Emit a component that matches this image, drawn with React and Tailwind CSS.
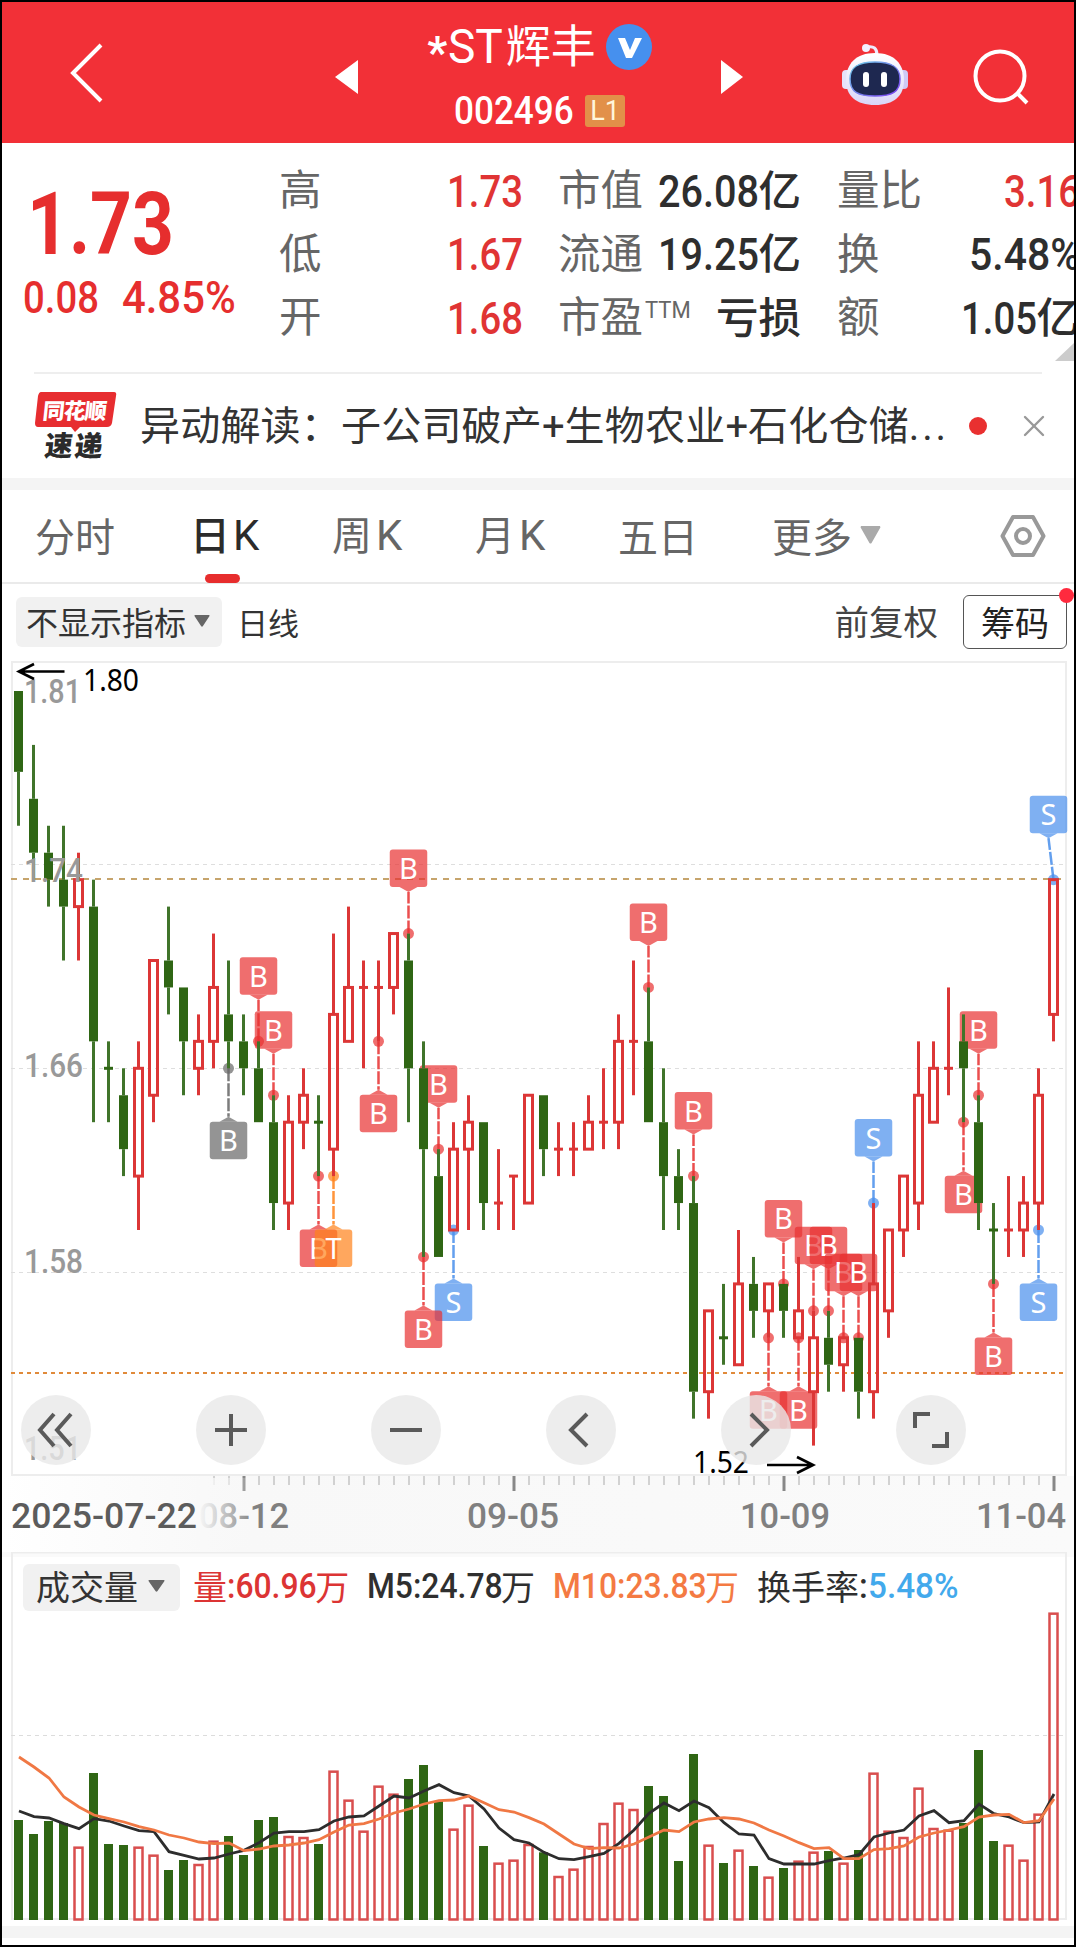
import { X } from "lucide-react";

const RED = "#dc3636";
const GREEN = "#2f6614";

// [color, high, bodyTop, bodyBottom, low] in 0.01 steps below 1.80
const candles = [
    ["g", 0, 0, 3, 5], ["g", 2, 4, 6, 7], ["g", 5, 6, 7, 8], ["g", 5, 7, 8, 10], ["r", 6, 7, 8, 10],
    ["g", 7, 8, 13, 16], ["g", 13, 14, 14, 16], ["g", 14, 15, 17, 18], ["r", 13, 14, 18, 20], ["r", 10, 10, 15, 16],
    ["g", 8, 10, 11, 12], ["g", 11, 11, 13, 15], ["r", 12, 13, 14, 15], ["r", 9, 11, 13, 14], ["g", 10, 12, 13, 14],
    ["g", 12, 13, 14, 15], ["g", 13, 14, 16, 16], ["g", 15, 16, 19, 20], ["r", 15, 16, 19, 20], ["r", 14, 15, 16, 17],
    ["g", 15, 16, 16, 18], ["r", 9, 12, 17, 18], ["r", 8, 11, 13, 13], ["r", 10, 11, 11, 14], ["r", 10, 11, 11, 13],
    ["r", 9, 9, 11, 12], ["g", 9, 10, 14, 16], ["g", 13, 14, 17, 21], ["g", 17, 18, 21, 21], ["r", 16, 17, 20, 20],
    ["r", 15, 16, 17, 20], ["g", 16, 16, 19, 20], ["r", 17, 19, 19, 20], ["r", 18, 18, 18, 20], ["r", 15, 15, 19, 19],
    ["g", 15, 15, 17, 18], ["r", 16, 17, 17, 18], ["r", 16, 17, 17, 18], ["r", 15, 16, 17, 17], ["r", 14, 16, 16, 17],
    ["r", 12, 13, 16, 17], ["r", 10, 13, 13, 15], ["g", 11, 13, 16, 16], ["g", 14, 16, 18, 20], ["g", 17, 18, 19, 20],
    ["g", 18, 19, 26, 27], ["r", 23, 23, 26, 27], ["g", 22, 24, 24, 25], ["r", 20, 22, 25, 25], ["g", 21, 22, 23, 24],
    ["r", 22, 22, 23, 24], ["g", 22, 22, 23, 24], ["r", 21, 23, 24, 24], ["r", 23, 24, 26, 28], ["g", 23, 24, 25, 26],
    ["r", 24, 24, 25, 26], ["g", 24, 24, 26, 27], ["r", 19, 22, 26, 27], ["r", 20, 20, 23, 24], ["r", 18, 18, 20, 21],
    ["r", 13, 15, 19, 20], ["r", 13, 14, 16, 16], ["r", 11, 14, 14, 15], ["g", 12, 13, 14, 16], ["g", 15, 16, 19, 20],
    ["g", 19, 20, 20, 22], ["r", 18, 20, 20, 21], ["r", 18, 19, 20, 21], ["r", 14, 15, 19, 20], ["r", 7, 7, 12, 13],
];

// [index, label, step, direction, x shift]
const flags = [
    [14, "B", 14, 1, 0, "#666666"], [16, "B", 13, -1], [17, "B", 15, -1], [20, "B", 18, 1], [21, "T", 18, 1],
    [24, "B", 13, 1], [26, "B", 9, -1], [29, "S", 20, 1], [27, "B", 21, 1], [28, "B", 17, -1],
    [42, "B", 11, -1], [45, "B", 18, -1], [50, "B", 24, 1], [51, "B", 22, -1], [52, "B", 24, 1],
    [53, "B", 23, -1], [54, "B", 23, -1], [55, "B", 24, -1], [56, "B", 24, -1], [57, "S", 19, -1],
    [63, "B", 16, 1], [64, "B", 15, -1], [65, "B", 22, 1], [68, "S", 20, 1], [69, "S", 7, -1, -5],
];
const flagColors = { B: "#e83030", S: "#488fec", T: "#ff8219" };

const volumes = [
    660, 702, 663, 669, 740, 519, 732, 735, 740, 764, 810, 780, 792, 722, 708, 765, 660, 651, 708, 711, 732, 512, 599,
    692, 557, 581, 537, 495, 603, 686, 614, 738, 788, 779, 732, 757, 828, 806, 738, 669, 608, 627, 558, 588, 783, 462,
    734, 789, 749, 798, 830, 804, 782, 755, 753, 788, 750, 518, 692, 711, 563, 684, 689, 669, 450, 723, 734, 779, 641, 38,
];
const ma5 = [
    633, 650, 654, 671, 686, 656, 663, 678, 692, 695, 755, 766, 777, 774, 762, 751, 728, 699, 695, 695, 689, 663, 651,
    648, 618, 588, 594, 573, 554, 578, 588, 627, 684, 719, 729, 757, 776, 779, 770, 760, 730, 690, 640, 609, 632, 603,
    623, 668, 702, 705, 776, 792, 792, 792, 782, 774, 764, 711, 699, 690, 648, 632, 668, 662, 612, 641, 651, 668, 666, 582,
];
const ma10 = [
    471, 501, 534, 591, 621, 645, 656, 666, 680, 690, 705, 714, 726, 731, 729, 752, 747, 738, 735, 729, 719, 696, 675,
    671, 657, 639, 627, 612, 602, 600, 588, 608, 629, 636, 653, 672, 702, 732, 746, 743, 744, 732, 711, 690, 695, 666,
    657, 653, 657, 669, 690, 708, 728, 746, 743, 776, 776, 749, 746, 738, 711, 699, 690, 680, 651, 645, 643, 668, 662, 597,
];

const px = i => 18.5 + i * 15;
const py = n => 691 + n * 26.95;
const vy = v => 1600 + v / 3;
const points = list => list.map((v, i) => `${px(i) + 0.5},${vy(v)}`).join(" ");

const glyphWidths = { ".": 0.2637, ":": 0.242, "%": 0.732, M: 0.873, L: 0.54, S: 0.6, T: 0.6 };

// Narrow digits: squeezed horizontally, the box keeps the squeezed width
function Num({ children, squeeze = 0.87, className = "" }) {
    const em = [...children].reduce((sum, c) => sum + (glyphWidths[c] || 0.5655), 0);
    return (
        <span className={`inline-block whitespace-nowrap font-[Roboto] font-medium ${className}`} style={{ width: `${em * squeeze}em` }}>
            <span className="inline-block origin-left" style={{ transform: `scaleX(${squeeze})` }}>{children}</span>
        </span>
    );
}

function Header() {
    return (
        <header className="flex h-[141px] bg-[#f23037] text-white">
            <div className="flex w-[330px] items-center pl-[66px]">
                <svg width="36" height="62" viewBox="0 0 36 62" fill="none" stroke="#fff" strokeWidth="4">
                    <path d="M33 3 L5 31 L33 59" />
                </svg>
            </div>
            <div className="flex w-[413px] items-center justify-between">
                <svg width="24" height="34" viewBox="0 0 24 34" fill="#fff" className="ml-[2px] mt-[8px]"><path d="M1 17 L24 0 V34z" /></svg>
                <div className="flex flex-col items-center pt-[3px]">
                    <div className="flex h-[60px] items-center text-[45px]">
                        <span className="w-[21px] pt-[12px] font-[Roboto] text-[44px] font-bold">*</span>
                        <Num squeeze={0.96} className="text-[48px] !font-normal">ST</Num>
                        <span className="-mt-[6px] ml-[2px]">辉丰</span>
                        <svg width="46" height="46" viewBox="0 0 46 46" className="ml-[10px] -mt-px">
                            <circle cx="23" cy="23" r="23" fill="#4690ee" />
                            <path d="M12 14 L19 14 L24 26 L29 14 H36 L26 34 H20z" fill="#fff" />
                        </svg>
                    </div>
                    <div className="mt-[14px] flex h-[40px] items-center gap-[12px]">
                        <Num squeeze={0.9} className="text-[39px]">002496</Num>
                        <span className="flex h-8 w-10 items-center justify-center rounded-[3px] bg-[#e29049] font-[Roboto] text-[27px] text-[#fff6dc]">L1</span>
                    </div>
                </div>
                <svg width="24" height="34" viewBox="0 0 24 34" fill="#fff" className="mt-[8px]"><path d="M0 0 L22 17 L0 34z" /></svg>
            </div>
            <div className="flex flex-1 items-center justify-end gap-[62px] pr-[45px]">
                <svg width="68" height="64" viewBox="0 0 68 64" className="mt-[2px]">
                    <defs>
                        <linearGradient id="shell" x1="0" y1="0" x2="0" y2="1">
                            <stop offset="0" stopColor="#fff" />
                            <stop offset="1" stopColor="#d9d6f8" />
                        </linearGradient>
                        <linearGradient id="rim" x1="0" y1="0" x2="1" y2="1">
                            <stop offset="0" stopColor="#6fd0e8" />
                            <stop offset="1" stopColor="#7a3cf0" />
                        </linearGradient>
                    </defs>
                    <path d="M26 5 Q36 3 36 13" fill="none" stroke="#eeeafd" strokeWidth="3" />
                    <circle cx="25" cy="6" r="4" fill="#f3f0ff" />
                    <rect x="1" y="28" width="10" height="19" rx="4" fill="#e6e2fb" />
                    <rect x="57" y="28" width="10" height="19" rx="4" fill="#cfcaf5" />
                    <path d="M34 11 C53 11 63 22 63 38 C63 54 53 63 34 63 C15 63 5 54 5 38 C5 22 15 11 34 11z" fill="url(#shell)" />
                    <path d="M34 20 C51 20 59 25 59 37 C59 50 51 54 34 54 C17 54 9 50 9 37 C9 25 17 20 34 20z" fill="#1e2850" stroke="url(#rim)" strokeWidth="1.5" />
                    <rect x="22" y="30" width="6" height="15" rx="3" fill="#fff" />
                    <rect x="40" y="30" width="6" height="15" rx="3" fill="#fff" />
                </svg>
                <svg width="58" height="58" viewBox="0 0 58 58" fill="none" stroke="#fff" strokeWidth="4" className="mt-[6px]">
                    <circle cx="29" cy="29" r="24.5" />
                    <path d="M46 46 L56 56" />
                </svg>
            </div>
        </header>
    );
}

function Row({ label, sup, value, unit, red, squeeze }) {
    return (
        <div className="flex h-[63.5px] items-center justify-between whitespace-nowrap">
            <span className="-mt-[5px] flex text-[42.5px] text-[#666]">
                {label}
                {sup && <Num squeeze={0.96} className="mt-[14px] ml-[2px] text-[23px] !font-normal leading-[30px]">{sup}</Num>}
            </span>
            <span className={`flex items-center text-[42.5px] font-medium ${red ? "text-[#e03434]" : "text-[#2e2e2e]"}`}>
                {value && <Num squeeze={squeeze} className="mt-[4px] text-[44px]">{value}</Num>}
                {unit && <span className="-mt-[4px]">{unit}</span>}
            </span>
        </div>
    );
}

function Quote() {
    return (
        <section className="relative flex h-[229px] overflow-hidden pt-[15px]">
            <div className="w-[277px] shrink-0 text-[#e62e2e]">
                <Num squeeze={0.84} className="mt-[24px] ml-[25px] text-[87px] !font-bold leading-[84px]">1.73</Num>
                <div className="flex gap-[24px] pl-[21px] pt-[6px] text-[44px] leading-[52px]">
                    <Num>0.08</Num>
                    <Num squeeze={0.95}>4.85%</Num>
                </div>
            </div>
            <div className="w-[243px] shrink-0">
                <Row label="高" value="1.73" red />
                <Row label="低" value="1.67" red />
                <Row label="开" value="1.68" red />
            </div>
            <div className="ml-[36px] w-[243px] shrink-0">
                <Row label="市值" value="26.08" unit="亿" squeeze={0.9} />
                <Row label="流通" value="19.25" unit="亿" squeeze={0.9} />
                <Row label="市盈" sup="TTM" unit="亏损" />
            </div>
            <div className="ml-[36px] w-[242px] shrink-0">
                <Row label="量比" value="3.16" red />
                <Row label="换" value="5.48%" squeeze={0.93} />
                <Row label="额" value="1.05" unit="亿" />
            </div>
            <svg width="19" height="18" className="absolute right-0 top-[200px]"><path d="M19 0 V18 H0z" fill="#ccc" /></svg>
        </section>
    );
}

function News() {
    return (
        <section className="mx-[32px] flex h-[106px] items-center border-t-2 border-[#eee]">
            <div className="relative ml-px flex h-[68px] w-[80px] shrink-0 flex-col items-center">
                <svg width="82" height="42" viewBox="0 0 82 42" className="absolute left-0 top-0">
                    <path d="M6 0 H79 Q82 0 81 4 L77 31 Q76 35 72 35 H45 L40 40 L36 35 H3 Q0 35 0 31 L3 4 Q4 0 6 0z" fill="#e72d30" />
                </svg>
                <span className="relative -skew-x-6 text-[22px] font-black leading-[34px] tracking-[-1px] text-white">同花顺</span>
                <span className="relative mt-[2px] -skew-x-6 text-[28px] font-black leading-[32px] tracking-[2px] text-[#2b2b2b]">速递</span>
            </div>
            <span className="-mt-[2px] ml-[25px] w-[815px] shrink-0 overflow-hidden whitespace-nowrap text-[40px] tracking-[0.2px] text-[#333]">
                异动解读：子公司破产<Num className="!font-normal" squeeze={1}>+</Num>生物农业<Num className="!font-normal" squeeze={1}>+</Num>石化仓储<span className="font-[Roboto] tracking-[2.8px]">...</span>
            </span>
            <span className="ml-[14px] h-[18px] w-[18px] shrink-0 rounded-full bg-[#e93030]" />
            <X size={36} strokeWidth={1.6} className="ml-[29px] shrink-0 text-[#999]" />
        </section>
    );
}

function Triangle({ w, h, color }) {
    return <svg width={w} height={h} viewBox="0 0 20 16" preserveAspectRatio="none"><path d="M1 0 H19 Q20 1 19 2 L11 15 Q10 16 9 15 L1 2 Q0 1 1 0z" fill={color} /></svg>;
}

function Tabs() {
    return (
        <nav className="flex h-[94px] items-center border-b-2 border-[#eaeaea] pl-[33px] text-[40px] text-[#666]">
            <span className="-mt-[3px] w-[155px]">分时</span>
            <span className="relative -mt-[3px] w-[142px] font-medium text-[#2b2b2b]">
                日<span className="pl-[3px] font-[Roboto] text-[42px] font-normal">K</span>
                <i className="absolute bottom-[-16px] left-[15px] h-[9px] w-[35px] rounded-full bg-[#e72d2d]" />
            </span>
            <span className="-mt-[3px] w-[143px]">周<span className="pl-[4px] font-[Roboto] text-[42px]">K</span></span>
            <span className="-mt-[3px] w-[143px]">月<span className="pl-[4px] font-[Roboto] text-[42px]">K</span></span>
            <span className="-mt-[3px] w-[154px]">五日</span>
            <span className="-mt-[3px] flex w-[228px] items-center gap-[8px]">更多<Triangle w={21} h={18} color="#aaa" /></span>
            <svg width="46" height="46" viewBox="0 0 46 46" fill="none" stroke="#999" strokeWidth="4" strokeLinejoin="round">
                <path d="M13 4 H33 L43.500 23 L33 42 H13 L2.500 23z" />
                <circle cx="23" cy="23" r="7" />
            </svg>
        </nav>
    );
}

function IndicatorBar() {
    return (
        <div className="flex h-[76px] items-center pl-[14px] pr-[7px]">
            <span className="flex h-[50px] w-[206px] items-center gap-[8px] rounded-md bg-[#f1f1f1] pb-[2px] pl-[10px] text-[32px] text-[#333]">
                不显示指标<Triangle w={16} h={12} color="#666" />
            </span>
            <span className="ml-[15px] text-[31px] text-[#333]">日线</span>
            <span className="-mt-[2px] ml-auto text-[34.500px] text-[#444]">前复权</span>
            <span className="relative ml-[25px] flex h-[54px] w-[104px] items-center justify-center rounded-md border-[1.500px] border-[#555] pb-[2px] text-[34px] text-[#222]">
                筹码
                <i className="absolute right-[-8px] top-[-8px] h-[15px] w-[15px] rounded-full bg-[#ff2a3e]" />
            </span>
        </div>
    );
}

function Flag({ flag }) {
    const [i, label, n, dir, shift = 0, custom] = flag;
    const color = custom || flagColors[label];
    const x = px(i);
    const fx = x + shift;
    const y = py(n);
    const top = dir < 0 ? y - 84 : y + 53.5;
    const base = dir < 0 ? y - 46.5 : y + 53.5;
    const tip = base - dir * 5;
    return (
        <g>
            <line x1={x} y1={y} x2={fx} y2={tip} stroke={color} strokeWidth="2.5" strokeDasharray="13 2" opacity=".85" />
            <circle cx={x} cy={y} r="5.500" fill={color} opacity=".7" />
            <rect x={fx - 18.75} y={top} width="37.500" height="37.500" rx="3" fill={color} opacity=".7" />
            <path d={`M${fx - 9} ${base} L${fx} ${tip} L${fx + 9} ${base}z`} fill={color} opacity=".7" />
            <text x={fx} y={top + 29.5} textAnchor="middle" fill="#fff" fontSize="29" fontFamily="Noto Sans, sans-serif">{label}</text>
        </g>
    );
}

function Candle({ candle, i }) {
    const [kind, high, top, bottom, low] = candle;
    const x = px(i);
    const color = kind === "r" ? RED : GREEN;
    const wick = kind === "r" ? RED : "#40742a";
    return (
        <g>
            {high < top && <line x1={x} x2={x} y1={py(high)} y2={py(top)} stroke={wick} strokeWidth="3" />}
            {low > bottom && <line x1={x} x2={x} y1={py(bottom)} y2={py(low)} stroke={wick} strokeWidth="3" />}
            {top === bottom && <line x1={x - 4.5} x2={x + 4.5} y1={py(top)} y2={py(top)} stroke={color} strokeWidth="3" />}
            {top !== bottom && kind === "g" && <rect x={x - 4.5} y={py(top)} width="9" height={py(bottom) - py(top)} fill={color} />}
            {top !== bottom && kind === "r" && <rect x={x - 4} y={py(top)} width="8" height={py(bottom) - py(top)} fill="none" stroke={color} strokeWidth="3" />}
        </g>
    );
}

const axisLabels = [["1.81", 702.5], ["1.74", 881.5], ["1.66", 1077], ["1.58", 1272.5], ["1.51", 1459.5]];
const dates = [["08-12", 199, 90], ["09-05", 467, 92], ["10-09", 740, 90], ["11-04", 976, 90]];

const controls = [
    "M33 19 L19 35 L33 51 M50 19 L36 35 L50 51",
    "M35 19 V51 M19 35 H51",
    "M19 35 H51",
    "M41 19 L25 35 L41 51",
    "M30 19 L46 35 L30 51",
    "M19 33 V19 H34 M51 37 V51 H36",
];

function PriceChart() {
    return (
        <div className="relative h-[892px]">
            <svg width="1072" height="892" viewBox="2 660 1072 892" className="block">
                <defs>
                    <linearGradient id="axisFade" x1="0" x2="1">
                        <stop offset="0" stopColor="#fff" />
                        <stop offset=".22" stopColor="#f8f8f8" />
                        <stop offset="1" stopColor="#fafafa" />
                    </linearGradient>
                    <linearGradient id="dateFade" x1="0" x2="1">
                        <stop offset="0" stopColor="#f9f9f9" />
                        <stop offset=".2" stopColor="#f9f9f9" stopOpacity=".85" />
                        <stop offset="1" stopColor="#f9f9f9" stopOpacity="0" />
                    </linearGradient>
                </defs>
                <rect x="2" y="1476" width="1072" height="76" fill="url(#axisFade)" />
                <rect x="12" y="662" width="1054" height="813" fill="#fff" stroke="#ededed" strokeWidth="2" />
                {[864.5, 1068.5, 1272.5].map(y => (
                    <line key={y} x1="11" x2="1064" y1={y} y2={y} stroke="#dedede" strokeWidth="1.200" strokeDasharray="4 4" />
                ))}
                <line x1="11" x2="1062" y1="879" y2="879" stroke="#c6a46c" strokeWidth="2" strokeDasharray="6 6" />
                <line x1="11" x2="1064" y1="1373" y2="1373" stroke="#e08a3a" strokeWidth="2" strokeDasharray="4 4" />

                {flags.map(flag => <Flag key={flag[0]} flag={flag} />)}
                {candles.map((candle, i) => <Candle key={i} candle={candle} i={i} />)}

                {axisLabels.map(([label, y]) => (
                    <text key={label} x="24" y={y} textLength={label.endsWith("1") ? 57 : 59} lengthAdjust="spacingAndGlyphs" fill="#999" fontSize="34" fontWeight="500" fontFamily="Roboto, sans-serif">{label}</text>
                ))}
                <path d="M64.500 671.500 H20 M34 664 L19 671.500 L34 679" fill="none" stroke="#000" strokeWidth="2.700" />
                <text x="83" y="691" textLength="56" lengthAdjust="spacingAndGlyphs" fontSize="30" fontFamily="Noto Sans, sans-serif">1.80</text>
                <path d="M767 1465 H813 M797 1457 L813 1465 L797 1473" fill="none" stroke="#000" strokeWidth="2.700" />
                <text x="693" y="1472.500" textLength="56" lengthAdjust="spacingAndGlyphs" fontSize="30" fontFamily="Noto Sans, sans-serif">1.52</text>

                {candles.map((_, i) => i > 12 && (
                    <line key={i} x1={px(i) + 0.5} x2={px(i) + 0.5} y1="1476" y2={i % 18 === 15 ? 1491 : 1485} stroke={i % 18 === 15 ? "#888" : "#c4c4c4"} strokeWidth={i % 18 === 15 ? 3 : 1.5} />
                ))}
                {dates.map(([label, x, w]) => (
                    <text key={label} x={x} y="1528" textLength={w} lengthAdjust="spacingAndGlyphs" fill="#808080" fontSize="35" fontWeight="500" fontFamily="Roboto, sans-serif">{label}</text>
                ))}
                <rect x="197" y="1478" width="58" height="70" fill="url(#dateFade)" />
                <text x="11" y="1528" textLength="186" lengthAdjust="spacingAndGlyphs" fill="#5c5c5c" fontSize="35" fontWeight="500" fontFamily="Roboto, sans-serif">2025-07-22</text>
            </svg>
            <div className="absolute left-[19px] top-[735px] flex gap-[105px]">
                {controls.map(d => (
                    <button key={d} className="h-[70px] w-[70px] rounded-full bg-[#e9e9e9]/80">
                        <svg width="70" height="70" viewBox="0 0 70 70" fill="none" stroke="#5a5a5a" strokeWidth="4"><path d={d} /></svg>
                    </button>
                ))}
            </div>
        </div>
    );
}

function VolumeLegend() {
    return (
        <div className="absolute left-[21px] top-[11px] flex h-[48px] items-center whitespace-nowrap text-[34px]">
            <span className="flex h-[47px] w-[157px] items-center gap-[10px] rounded-md bg-[#f1f1f1] pb-[3px] pl-[13px] text-[#333]">
                成交量<Triangle w={17} h={12} color="#666" />
            </span>
            <span className="ml-[13px] flex w-[174px] items-center text-[#dc3434]"><span className="-mt-[4px]">量</span><Num squeeze={0.91} className="text-[35px]">:60.96</Num><span className="-mt-[4px]">万</span></span>
            <span className="flex w-[186px] items-center text-[#2f2f2f]"><Num squeeze={0.91} className="text-[35px]">M5:24.78</Num><span className="-mt-[4px]">万</span></span>
            <span className="flex w-[204px] items-center text-[#f47a43]"><Num squeeze={0.91} className="text-[35px]">M10:23.83</Num><span className="-mt-[4px]">万</span></span>
            <span className="flex items-center text-[#2f2f2f]"><span className="-mt-[4px]">换手率</span><Num squeeze={0.95} className="text-[35px]">:</Num></span>
            <Num squeeze={0.95} className="ml-px text-[35px] text-[#42a9ec]">5.48%</Num>
        </div>
    );
}

function VolumeChart() {
    return (
        <div className="relative h-[374px]">
            <svg width="1072" height="374" viewBox="2 1552 1072 374" className="block">
                <rect x="2" y="1552" width="1072" height="5" fill="#fafafa" />
                <path d="M12 1919 V1552.500 H1066 V1919z" fill="none" stroke="#ededed" strokeWidth="2" />
                <line x1="11" x2="1064" y1="1735.500" y2="1735.500" stroke="#dcdcdc" strokeWidth="1.200" strokeDasharray="4 4" />
                {volumes.map((v, i) => candles[i][0] === "g"
                    ? <rect key={i} x={px(i) - 4.5} y={vy(v)} width="9" height={1920 - vy(v)} fill={GREEN} />
                    : <rect key={i} x={px(i) - 4} y={vy(v) + 1} width="8" height={1918.500 - vy(v)} fill="none" stroke="#d94e4e" strokeWidth="2.500" />
                )}
                <polyline points={points(ma5)} fill="none" stroke="#2d2d2d" strokeWidth="2.800" />
                <polyline points={points(ma10)} fill="none" stroke="#f07844" strokeWidth="2.800" />
            </svg>
            <VolumeLegend />
        </div>
    );
}

export default function App() {
    return (
        <div className="h-[1947px] w-[1076px] overflow-hidden border-2 border-black bg-white font-['Noto_Sans_CJK_SC',sans-serif]">
            <Header />
            <Quote />
            <News />
            <div className="h-[12px] bg-[#f4f4f4]" />
            <Tabs />
            <IndicatorBar />
            <PriceChart />
            <VolumeChart />
            <div className="h-[12px] bg-[#f4f4f4]" />
        </div>
    );
}
